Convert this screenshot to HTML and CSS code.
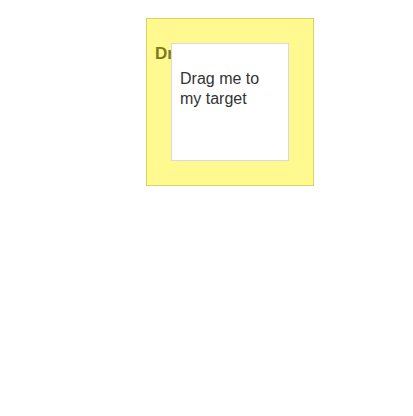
FILE: index.html
```html
<!DOCTYPE html>
<html>
<head>
<meta charset="utf-8">
<link rel="stylesheet" href="styles.css">
</head>
<body>
<div class="stage">
  <div class="target">
    <p class="target-label">Drop here</p>
    <div class="draggable">
      <p class="drag-text">Drag me to my target</p>
    </div>
  </div>
</div>
</body>
</html>
```
FILE: styles.css
```css
html, body {
  margin: 0;
  padding: 0;
  background: #fff;
  font-family: "Liberation Sans", Arial, sans-serif;
  font-size: 16px;
}
.stage {
  padding: 18px 0 0 146px;
}
.target {
  position: relative;
  box-sizing: border-box;
  width: 168px;
  height: 168px;
  padding: 8px;
  background: #fff98f;
  border: 1px solid #d9d35e;
}
.target-label {
  margin: 17px 0;
  font-size: 17px;
  font-weight: bold;
  color: #7d7a1c;
}
.draggable {
  position: absolute;
  left: 24px;
  top: 24px;
  box-sizing: border-box;
  width: 118px;
  height: 118px;
  padding: 8px;
  background: #fff;
  border: 1px solid #dadada;
}
.drag-text {
  margin: 17px 0;
  color: #333;
  line-height: 20px;
}
```
